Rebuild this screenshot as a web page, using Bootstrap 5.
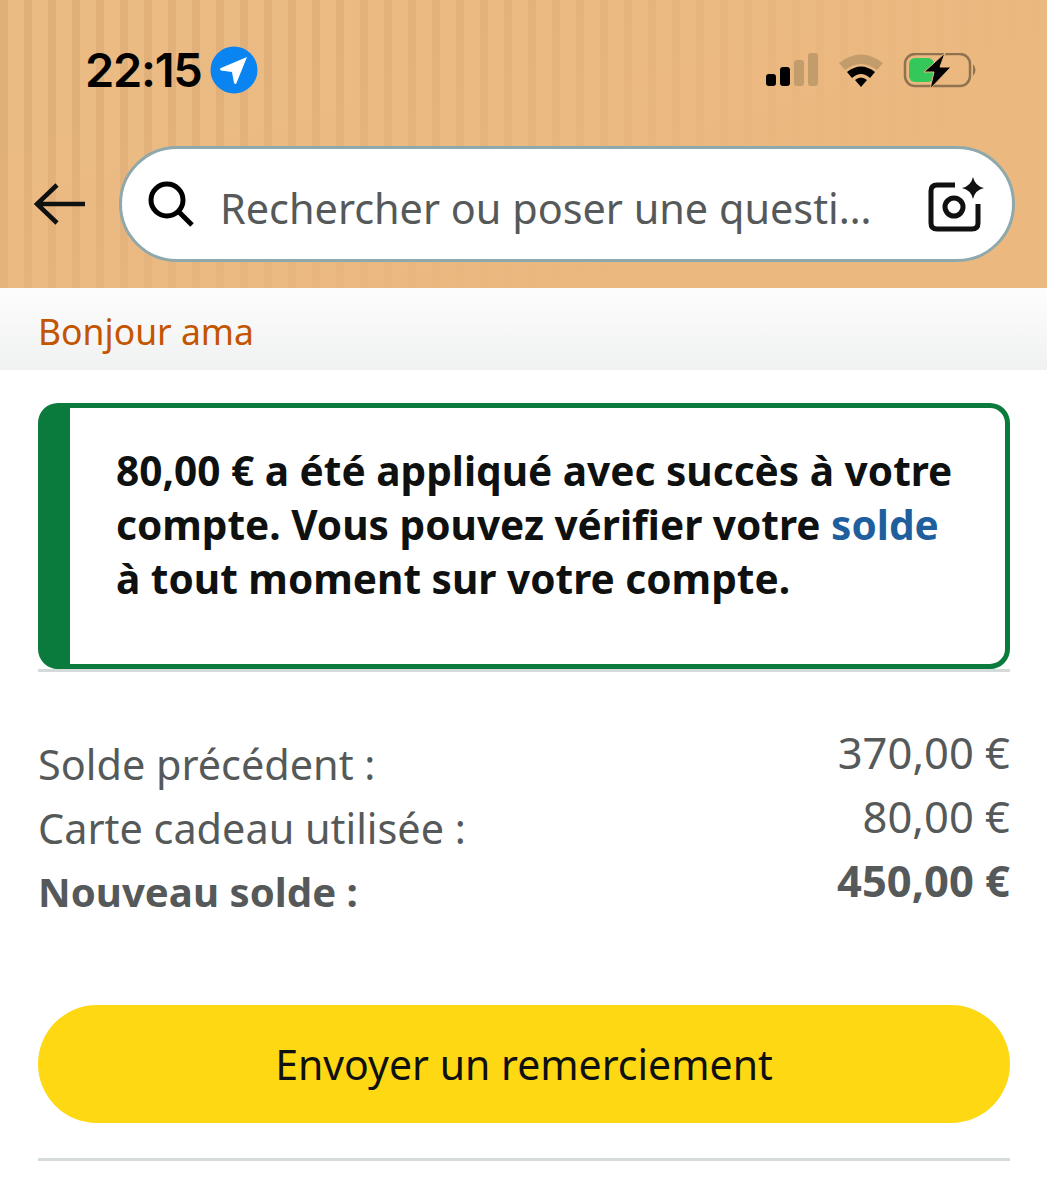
<!DOCTYPE html>
<html lang="fr">
<head>
    <meta charset="UTF-8">
    <meta name="viewport" content="width=device-width, initial-scale=1.0">
    <title>Solde carte cadeau</title>
    <link href="https://cdn.jsdelivr.net/npm/bootstrap@5.3.2/dist/css/bootstrap.min.css" rel="stylesheet">
    <style>
        body {
            font-family: "Noto Sans", "Open Sans", sans-serif;
            background: #fff;
            color: #0f1111;
        }
        .top-head {
            height: 288px;
            background:
                linear-gradient(to bottom right, rgba(235,184,128,0) 25%, rgba(235,184,128,.5) 55%, #ebb880 80%),
                linear-gradient(to right, rgba(235,184,128,0) 0, rgba(235,184,128,.25) 50%, rgba(235,184,128,.9) 95%),
                repeating-linear-gradient(to right, #e1af79 0 8px, #ebbb84 8px 24px);
        }
        .status-row {
            height: 146px;
            padding: 42px 68px 0 85px;
        }
        .clock {
            font-family: "Inter", sans-serif;
            font-size: 47px;
            font-weight: 600;
            line-height: 56px;
            color: #000;
            letter-spacing: -1.3px;
        }
        .status-icons {
            margin: 11px 0 0 0;
            gap: 19px;
        }
        .search-row {
            height: 116px;
            padding: 0 32px 0 34px;
            gap: 33px;
        }
        .search-pill {
            height: 116px;
            border: 3px solid #8fa8ac;
            border-radius: 58px;
            background: #fff;
            padding: 0 26px 0 25px;
        }
        .search-text {
            font-size: 41.400px;
            color: #565959;
            white-space: nowrap;
            margin-left: 25px;
            padding-top: 9px;
        }
        .cam-icon {
            margin-top: 4px;
        }
        .hello-bar {
            height: 82px;
            padding: 21px 38px 0;
            background: linear-gradient(to bottom, #fdfdfd, #f0f1f1);
            color: #c45500;
            font-size: 35.500px;
            line-height: 44px;
        }
        .main-wrap {
            padding: 33px 37px 0 38px;
        }
        .ok-box {
            height: 266px;
            border: 5px solid #0b7a3d;
            border-left-width: 32px;
            border-radius: 20px;
            padding: 36px 50px 0 46px;
            font-size: 40.600px;
            font-weight: 700;
            line-height: 54px;
            color: #0f1111;
        }
        .ok-box a {
            color: #1f5f9e;
            text-decoration: none;
        }
        .rule-line {
            height: 3px;
            background: #d5dbdb;
        }
        .sum-list {
            margin-top: 60px;
            color: #565959;
            font-size: 41.400px;
            line-height: 64px;
        }
        .sum-total {
            font-size: 40.200px;
            font-weight: 700;
        }
        .sum-amount {
            position: relative;
            top: -12px;
            font-size: 43.500px;
        }
        .thanks-btn {
            height: 118px;
            margin-top: 81px;
            padding-top: 8px;
            border: 0;
            border-radius: 59px;
            background: #ffd814;
            color: #0f1111;
            font-size: 41px;
        }
        .end-rule {
            margin-top: 35px;
        }
    </style>
</head>
<body>
    <div class="top-head">
        <div class="status-row d-flex justify-content-between align-items-start">
            <div class="d-flex align-items-center gap-2">
                <span class="clock">22:15</span>
                <svg width="48" height="48" viewBox="0 0 48 48">
                    <circle cx="24" cy="24" r="23.500" fill="#0a84f0"/>
                    <path d="M37 11 L11 22 Q9 23 11 24.500 L22 26 L24 37 Q25.500 39 26.500 37 Z" fill="#fff"/>
                </svg>
            </div>
            <div class="status-icons d-flex align-items-start">
                <svg width="54" height="36" viewBox="0 0 54 36">
                    <rect x="1" y="21" width="10" height="12" rx="3" fill="#000"/>
                    <rect x="15" y="14" width="10" height="19" rx="3" fill="#000"/>
                    <rect x="29" y="7" width="10" height="26" rx="3" fill="#c39c6c"/>
                    <rect x="43" y="0" width="10" height="33" rx="3" fill="#c39c6c"/>
                </svg>
                <svg width="46" height="36" viewBox="0 0 46 36">
                    <path d="M1 10 Q23 -7 45 10 L39 17 Q23 5 7 17 Z" fill="#c39c6c"/>
                    <path d="M9 19 Q23 8 37 19 L32 25 Q23 17 14 25 Z" fill="#000"/>
                    <path d="M17 27 Q23 22 29 27 L23 34 Z" fill="#000"/>
                </svg>
                <svg width="76" height="36" viewBox="0 0 76 36">
                    <rect x="2" y="1" width="65" height="32" rx="10" fill="none" stroke="#8f7350" stroke-width="2.500"/>
                    <rect x="6" y="5" width="25" height="24" rx="6" fill="#34c759"/>
                    <path d="M70 11 Q75 17 70 23 Z" fill="#8f7350"/>
                    <path d="M42 0 L21 19 L31 19 L27 36 L48 14 L37 14 Z" fill="#000" stroke="#ebb880" stroke-width="1"/>
                </svg>
            </div>
        </div>
        <div class="search-row d-flex align-items-center">
            <svg class="flex-shrink-0" width="52" height="42" viewBox="0 0 52 42">
                <path d="M51 21 H3 M23 2 L3 21 L23 40" fill="none" stroke="#0f1111" stroke-width="4.500"/>
            </svg>
            <div class="search-pill flex-grow-1 d-flex align-items-center">
                <svg class="flex-shrink-0" width="48" height="48" viewBox="0 0 48 48">
                    <circle cx="20" cy="20" r="16" fill="none" stroke="#000" stroke-width="5"/>
                    <path d="M31 31 L45 45" stroke="#000" stroke-width="5"/>
                </svg>
                <span class="search-text flex-grow-1">Rechercher ou poser une questi…</span>
                <svg class="cam-icon flex-shrink-0" width="58" height="58" viewBox="0 0 58 58">
                    <path d="M27 8 H9 Q3 8 3 14 V46 Q3 52 9 52 H44 Q50 52 50 46 V27" fill="none" stroke="#111" stroke-width="5"/>
                    <circle cx="26" cy="30" r="9" fill="none" stroke="#111" stroke-width="5"/>
                    <path d="M45 0 Q47 9 56 11 Q47 13 45 22 Q43 13 34 11 Q43 9 45 0 Z" fill="#111"/>
                </svg>
            </div>
        </div>
    </div>

    <div class="hello-bar">Bonjour ama</div>

    <div class="main-wrap">
        <div class="ok-box">80,00 € a été appliqué avec succès à votre compte. Vous pouvez vérifier votre <a href="#">solde</a> à tout moment sur votre compte.</div>
        <div class="rule-line"></div>

        <div class="sum-list">
            <div class="d-flex justify-content-between"><span>Solde précédent :</span><span class="sum-amount">370,00 €</span></div>
            <div class="d-flex justify-content-between"><span>Carte cadeau utilisée :</span><span class="sum-amount">80,00 €</span></div>
            <div class="d-flex justify-content-between sum-total"><span>Nouveau solde :</span><span class="sum-amount">450,00 €</span></div>
        </div>

        <button type="button" class="btn thanks-btn w-100">Envoyer un remerciement</button>
        <div class="rule-line end-rule"></div>
    </div>
</body>
</html>
